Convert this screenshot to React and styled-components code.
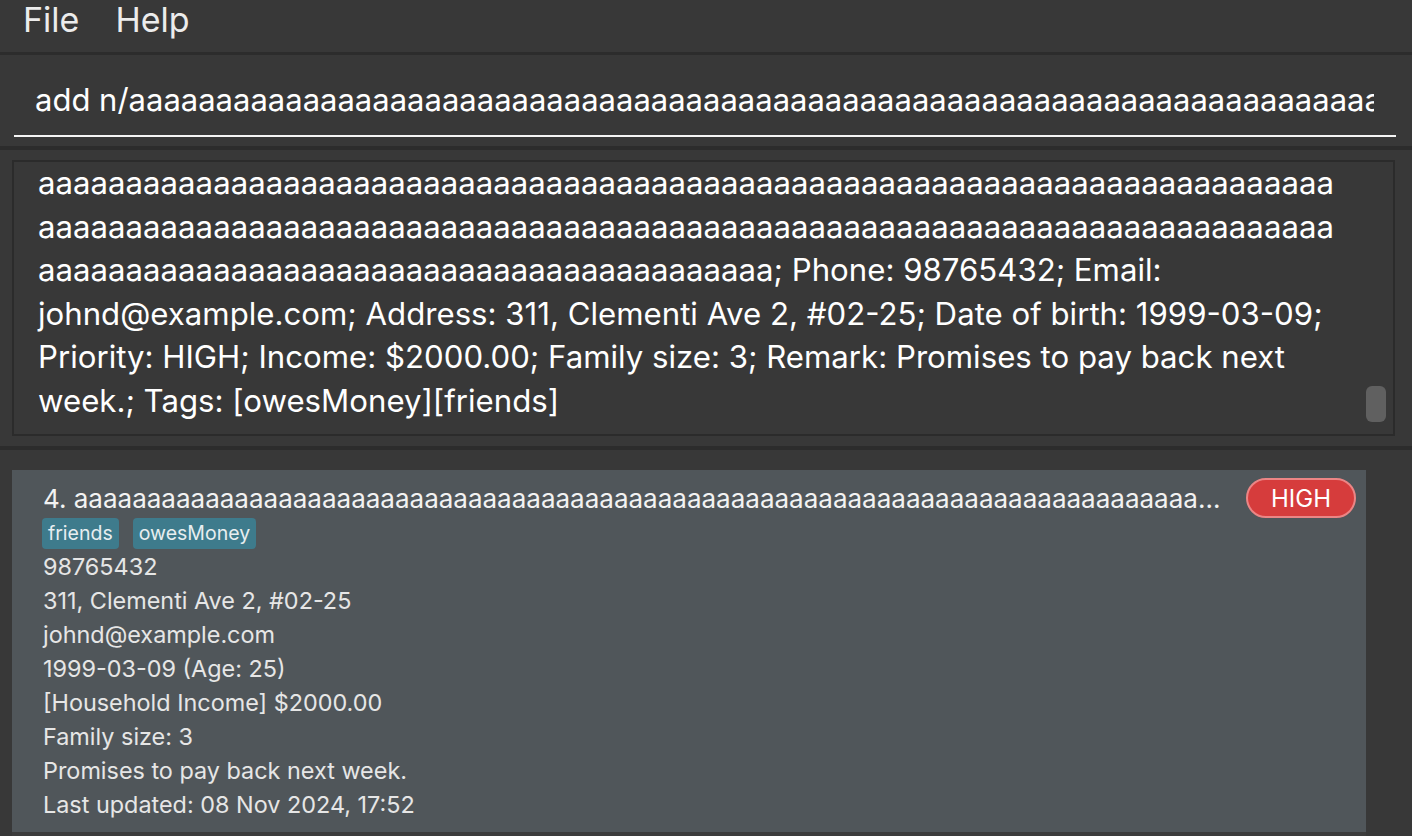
import styled, { createGlobalStyle } from 'styled-components';

const GlobalStyle = createGlobalStyle`
  html, body {
    margin: 0;
    padding: 0;
    background: #383838;
    overflow: hidden;
  }
  body {
    font-family: Inter, "Noto Sans", sans-serif;
  }
`;

const shownName = 'a'.repeat(77) + '...';

const resultLines = [
  'a'.repeat(74),
  'a'.repeat(74),
  'a'.repeat(42) + '; Phone: 98765432; Email:',
  'johnd@example.com; Address: 311, Clementi Ave 2, #02-25; Date of birth: 1999-03-09;',
  'Priority: HIGH; Income: $2000.00; Family size: 3; Remark: Promises to pay back next',
  'week.; Tags: [owesMoney][friends]',
];

const details = [
  '98765432',
  '311, Clementi Ave 2, #02-25',
  'johnd@example.com',
  '1999-03-09 (Age: 25)',
  '[Household Income] $2000.00',
  'Family size: 3',
  'Promises to pay back next week.',
  'Last updated: 08 Nov 2024, 17:52',
];

export default function App() {
  return (
    <>
      <GlobalStyle />
      <Window>
        <MenuBar>
          <MenuItem>File</MenuItem>
          <MenuItem>Help</MenuItem>
        </MenuBar>
        <Divider />

        <CommandSection>
          <CommandInput readOnly value={'add n/' + 'a'.repeat(120)} />
        </CommandSection>
        <Divider $thick />

        <ResultSection>
          <ResultBox>
            {resultLines.map((line, i) => (
              <ResultLine key={i}>{line}</ResultLine>
            ))}
            <ScrollThumb />
          </ResultBox>
        </ResultSection>
        <Divider $thick />

        <ListSection>
          <Card>
            <CardHeader>
              <CardName>4. {shownName}</CardName>
              <PriorityBadge>HIGH</PriorityBadge>
            </CardHeader>
            <Tags>
              <Tag>friends</Tag>
              <Tag>owesMoney</Tag>
            </Tags>
            {details.map((d) => (
              <Detail key={d}>{d}</Detail>
            ))}
          </Card>
          <NextCell />
        </ListSection>
      </Window>
    </>
  );
}

const Window = styled.div`
  height: 836px;
  display: flex;
  flex-direction: column;
  background: #383838;
  color: #ffffff;
`;

const MenuBar = styled.div`
  height: 52px;
  display: flex;
  align-items: center;
  gap: 36px;
  padding: 0 0 14px 23px;
  box-sizing: border-box;
`;

const MenuItem = styled.span`
  font-size: 34px;
  color: #ececec;
`;

const Divider = styled.div`
  height: ${(p) => (p.$thick ? '4px' : '3px')};
  background: #2c2c2c;
  flex-shrink: 0;
`;

const CommandSection = styled.div`
  height: 91px;
  padding: 0 16px 9px 14px;
  box-sizing: border-box;
  display: flex;
  align-items: flex-end;
`;

const CommandInput = styled.input`
  width: 100%;
  box-sizing: border-box;
  height: 64px;
  padding: 0 22px 10px 21px;
  border: none;
  border-bottom: 2px solid #f4f4f4;
  background: transparent;
  color: #ffffff;
  font-family: Inter, "Noto Sans", sans-serif;
  font-size: 31px;
  outline: none;
`;

const ResultSection = styled.div`
  height: 296px;
  padding: 10px 17px 10px 12px;
  box-sizing: border-box;
`;

const ResultBox = styled.div`
  position: relative;
  height: 100%;
  box-sizing: border-box;
  border: 2px solid #2b2b2b;
  padding: 0 0 0 24px;
  overflow: hidden;
`;

const ResultLine = styled.div`
  font-size: 31.2px;
  line-height: 43.6px;
  white-space: nowrap;
  color: #ffffff;
`;

const ScrollThumb = styled.div`
  position: absolute;
  right: 7px;
  bottom: 12px;
  width: 20px;
  height: 36px;
  border-radius: 6px;
  background: #606060;
`;

const ListSection = styled.div`
  flex: 1;
  padding: 20px 46px 0 12px;
  display: flex;
  flex-direction: column;
  overflow: hidden;
`;

const Card = styled.div`
  background: #50565a;
  padding: 8px 10px 10px 31px;
  height: 362px;
  box-sizing: border-box;
  flex-shrink: 0;
`;

const CardHeader = styled.div`
  display: flex;
  align-items: center;
  gap: 22px;
  height: 40px;
`;

const CardName = styled.div`
  flex: 1;
  min-width: 0;
  font-size: 26px;
  color: #f2f2f2;
  white-space: nowrap;
  overflow: hidden;
`;

const PriorityBadge = styled.div`
  width: 110px;
  height: 40px;
  box-sizing: border-box;
  border-radius: 20px;
  background: #d63c3c;
  border: 2px solid #eb8585;
  color: #ffffff;
  font-size: 24px;
  display: flex;
  align-items: center;
  justify-content: center;
`;

const Tags = styled.div`
  display: flex;
  gap: 14px;
  margin: 0 0 1px -1px;
`;

const Tag = styled.span`
  background: #3e7b8c;
  color: #e8eef0;
  font-size: 19.5px;
  line-height: 31px;
  padding: 0 6px;
  border-radius: 4px;
`;

const Detail = styled.div`
  font-size: 23.4px;
  line-height: 34px;
  color: #e6e6e6;
`;

const NextCell = styled.div`
  height: 8px;
  background: #3c3c3c;
`;
